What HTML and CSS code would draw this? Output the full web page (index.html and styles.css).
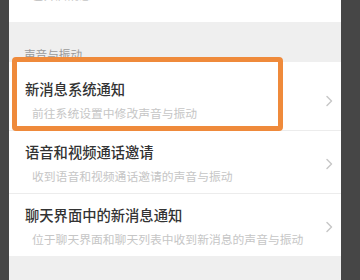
FILE: index.html
```html
<!DOCTYPE html>
<html lang="zh-CN">
<head>
    <meta charset="UTF-8">
    <meta name="viewport" content="width=device-width, initial-scale=1.0">
    <title>新消息通知</title>
    <link rel="stylesheet" href="styles.css">
</head>
<body>
    <div class="screen">
        <div class="top">
            <div class="sub top-sub">已开启消息</div>
        </div>

        <div class="section-title">声音与振动</div>

        <div class="list">
            <div class="item first">
                <div class="text">
                    <div class="title">新消息系统通知</div>
                    <div class="sub">前往系统设置中修改声音与振动</div>
                </div>
                <svg class="chevron" width="8" height="12" viewBox="0 0 8 12"><path d="M2 1.5 L6.5 6 L2 10.5" fill="none" stroke="#c8c8c8" stroke-width="1.5" stroke-linecap="round" stroke-linejoin="round"/></svg>
            </div>
            <div class="item">
                <div class="text">
                    <div class="title">语音和视频通话邀请</div>
                    <div class="sub">收到语音和视频通话邀请的声音与振动</div>
                </div>
                <svg class="chevron" width="8" height="12" viewBox="0 0 8 12"><path d="M2 1.5 L6.5 6 L2 10.5" fill="none" stroke="#c8c8c8" stroke-width="1.5" stroke-linecap="round" stroke-linejoin="round"/></svg>
            </div>
            <div class="item">
                <div class="text">
                    <div class="title">聊天界面中的新消息通知</div>
                    <div class="sub">位于聊天界面和聊天列表中收到新消息的声音与振动</div>
                </div>
                <svg class="chevron" width="8" height="12" viewBox="0 0 8 12"><path d="M2 1.5 L6.5 6 L2 10.5" fill="none" stroke="#c8c8c8" stroke-width="1.5" stroke-linecap="round" stroke-linejoin="round"/></svg>
            </div>
        </div>

        <!-- 高亮框 -->
        <div class="highlight"></div>
    </div>
</body>
</html>
```

FILE: styles.css
```css
body {
    margin: 0;
    background: #464646;
    font-family: "Noto Sans CJK SC", "Noto Sans", sans-serif;
}

.screen {
    position: relative;
    margin-left: 9px;
    width: 332px;
    height: 280px;
    background: #efefef;
    overflow: hidden;
}

.top {
    height: 22px;
    background: #fff;
    padding-left: 16px;
    overflow: hidden;
}

.top-sub {
    margin-top: -14px;
    padding-left: 0;
    color: #d0d0d0;
}

.section-title {
    padding: 24px 0 0 15px;
    line-height: 16px;
    font-size: 11.6px;
    color: #9a9a9a;
}

.list {
    background: #fff;
}

.item {
    display: flex;
    align-items: center;
    padding: 11px 8px 8px 16px;
    border-bottom: 1px solid #ececec;
}

.item:last-child {
    border-bottom: none;
}

.item.first {
    padding-top: 17px;
}

.text {
    flex: 1;
}

.title {
    font-size: 14.3px;
    line-height: 20px;
    font-weight: 500;
    color: #333;
    margin-bottom: 5px;
}

.sub {
    font-size: 11.8px;
    line-height: 18px;
    color: #c6c6c6;
    padding-left: 7px;
}

.chevron {
    display: block;
}

.highlight {
    position: absolute;
    left: 3px;
    top: 57px;
    width: 261px;
    height: 64px;
    border: 5px solid #ef8a3b;
    border-radius: 4px;
}
```
